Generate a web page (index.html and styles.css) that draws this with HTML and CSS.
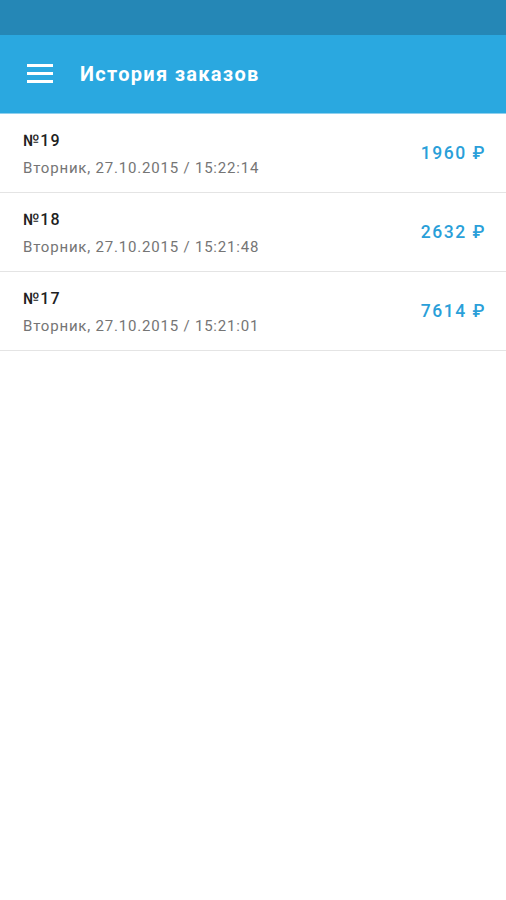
FILE: index.html
```html
<!DOCTYPE html>
<html lang="ru">
<head>
<meta charset="utf-8">
<title>История заказов</title>
<link rel="stylesheet" href="styles.css">
</head>
<body>
<div class="status-bar"></div>
<header class="app-bar">
  <svg class="menu-icon" width="26" height="20" viewBox="0 0 26 20" aria-hidden="true">
    <rect x="0" y="1" width="26" height="3" fill="#fff"/>
    <rect x="0" y="9" width="26" height="3" fill="#fff"/>
    <rect x="0" y="17" width="26" height="3" fill="#fff"/>
  </svg>
  <h1 class="title">История заказов</h1>
</header>
<ul class="orders">
  <li class="order">
    <div class="info">
      <div class="num">№19</div>
      <div class="date">Вторник, 27.10.2015 / 15:22:14</div>
    </div>
    <div class="price">1960 ₽</div>
  </li>
  <li class="order">
    <div class="info">
      <div class="num">№18</div>
      <div class="date">Вторник, 27.10.2015 / 15:21:48</div>
    </div>
    <div class="price">2632 ₽</div>
  </li>
  <li class="order">
    <div class="info">
      <div class="num">№17</div>
      <div class="date">Вторник, 27.10.2015 / 15:21:01</div>
    </div>
    <div class="price">7614 ₽</div>
  </li>
</ul>
</body>
</html>
```
FILE: styles.css
```css
html, body {
  margin: 0;
  padding: 0;
  background: #ffffff;
  font-family: Roboto, "Noto Sans", "Liberation Sans", sans-serif;
}
.status-bar {
  height: 35px;
  background: #2587b6;
}
.app-bar {
  height: 78px;
  background: #2aa8e0;
  display: flex;
  align-items: center;
  padding-left: 27px;
  border-bottom: 1px solid #8fd0ee;
}
.menu-icon {
  display: block;
  margin-top: -2px;
}
.title {
  margin: 0 0 0 27px;
  color: #ffffff;
  font-size: 20px;
  font-weight: 700;
  letter-spacing: 1.3px;
}
.orders {
  list-style: none;
  margin: 0;
  padding: 0;
}
.order {
  height: 78px;
  display: flex;
  align-items: center;
  justify-content: space-between;
  padding: 0 20px 0 23px;
  border-bottom: 1px solid #e4e4e4;
}
.info {
  display: flex;
  flex-direction: column;
  gap: 8px;
  padding-top: 2px;
}
.num {
  font-size: 16px;
  font-weight: 500;
  color: #212121;
  line-height: 20px;
  letter-spacing: 1px;
}
.date {
  font-size: 15px;
  color: #757575;
  line-height: 18px;
  letter-spacing: 0.8px;
}
.price {
  font-size: 17.5px;
  font-weight: 500;
  color: #2a9fd9;
  letter-spacing: 1.5px;
}
```
